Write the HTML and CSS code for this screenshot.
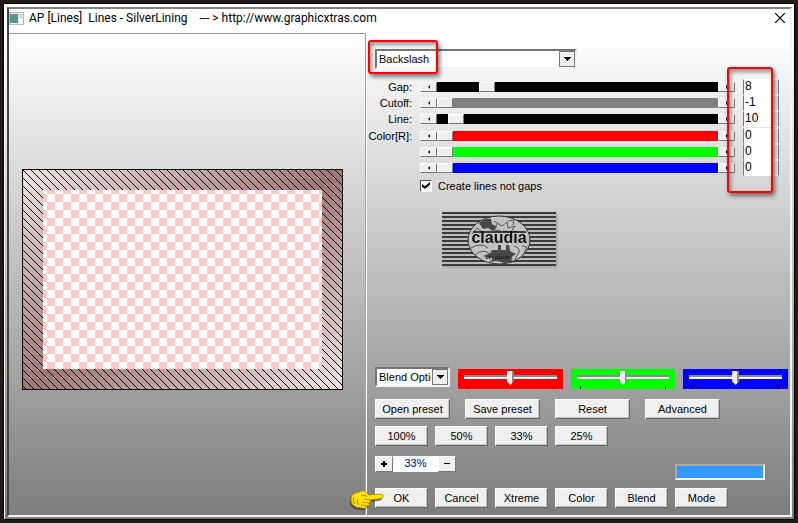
FILE: index.html
```html
<!DOCTYPE html>
<html lang="en">
<head>
<meta charset="utf-8">
<title>AP [Lines] Lines - SilverLining</title>
<link rel="stylesheet" href="styles.css">
</head>
<body>
<div class="window">
  <div class="frame">
    <header class="titlebar">
      <svg class="app-icon" width="15" height="13" viewBox="0 0 15 13" aria-hidden="true">
        <rect x="0.5" y="0.5" width="14" height="12" fill="#eef0f0" stroke="#b4b8b8"/>
        <rect x="1" y="2" width="8" height="9" fill="#5f8fa8"/>
        <path d="M1 11V6l4-3 4 4v4z" fill="#4f9a86"/>
        <rect x="10" y="2" width="3" height="4" fill="#cfdcdc"/>
        <rect x="10" y="7" width="3" height="4" fill="#fff"/>
      </svg>
      <h1 class="title">AP [Lines]  Lines - SilverLining    --- &gt; http://www.graphicxtras.com</h1>
      <button class="close" aria-label="Close">
        <svg width="10" height="10" viewBox="0 0 10 10"><path d="M0 0L10 10M10 0L0 10" stroke="#000" stroke-width="1.2"/></svg>
      </button>
    </header>
    <main class="panes">
      <section class="preview-pane" aria-label="Preview">
        <svg class="preview" viewBox="0 0 321 221" aria-hidden="true">
          <defs>
            <linearGradient id="rose" x1="0" y1="0" x2="1" y2="1">
              <stop offset="0" stop-color="#f0e6e4"/>
              <stop offset="0.5" stop-color="#a07876"/>
              <stop offset="1" stop-color="#f0e6e4"/>
            </linearGradient>
            <pattern id="hatch" width="8" height="8" patternUnits="userSpaceOnUse">
              <path d="M0 0h1v1h1v1h1v1h1v1h1v1h1v1h1v1h1v1h-1v-1h-1v-1h-1v-1h-1v-1h-1v-1h-1v-1h-1v-1h-1z" fill="#000" shape-rendering="crispEdges"/>
            </pattern>
            <pattern id="checks" x="17" y="17" width="16" height="16" patternUnits="userSpaceOnUse">
              <rect width="16" height="16" fill="#fff"/>
              <path d="M8 0h8v8h-8zM0 8h8v8h-8z" fill="#ffc8c8"/>
            </pattern>
          </defs>
          <rect width="321" height="221" fill="url(#rose)"/>
          <rect width="321" height="221" fill="url(#hatch)"/>
          <rect x="0.5" y="0.5" width="320" height="220" fill="none" stroke="#000"/>
          <rect x="21" y="21" width="279" height="179" fill="url(#checks)"/>
        </svg>
      </section>
      <section class="controls">
        <div class="pattern-pick">
          <select class="combo" aria-label="Pattern"><option>Backslash</option></select>
          <span class="marker marker-pick"></span>
        </div>
        <div class="params">
          <div class="param black">
            <label for="gap">Gap:</label>
            <div class="scroller"><button class="arrow prev" aria-label="Decrease gap"></button><input id="gap" type="range" value="16"><button class="arrow next" aria-label="Increase gap"></button></div>
            <input class="value" aria-label="Gap value" value="8">
          </div>
          <div class="param gray">
            <label for="cutoff">Cutoff:</label>
            <div class="scroller"><button class="arrow prev" aria-label="Decrease cutoff"></button><input id="cutoff" type="range" value="0"><button class="arrow next" aria-label="Increase cutoff"></button></div>
            <input class="value" aria-label="Cutoff value" value="-1">
          </div>
          <div class="param black">
            <label for="line">Line:</label>
            <div class="scroller"><button class="arrow prev" aria-label="Decrease line"></button><input id="line" type="range" value="4"><button class="arrow next" aria-label="Increase line"></button></div>
            <input class="value" aria-label="Line value" value="10">
          </div>
          <div class="param red colors">
            <label for="red">Color[R]:</label>
            <div class="scroller"><button class="arrow prev" aria-label="Decrease red"></button><input id="red" type="range" value="0"><button class="arrow next" aria-label="Increase red"></button></div>
            <input class="value" aria-label="Red value" value="0">
          </div>
          <div class="param green">
            <span></span>
            <div class="scroller"><button class="arrow prev" aria-label="Decrease green"></button><input type="range" aria-label="Green" value="0"><button class="arrow next" aria-label="Increase green"></button></div>
            <input class="value" aria-label="Green value" value="0">
          </div>
          <div class="param blue">
            <span></span>
            <div class="scroller"><button class="arrow prev" aria-label="Decrease blue"></button><input type="range" aria-label="Blue" value="0"><button class="arrow next" aria-label="Increase blue"></button></div>
            <input class="value" aria-label="Blue value" value="0">
          </div>
          <span class="marker marker-values"></span>
        </div>
        <label class="check"><input type="checkbox" checked>Create lines not gaps</label>
        <svg class="logo" width="114" height="56" viewBox="0 0 114 56" role="img" aria-label="claudia">
          <defs>
            <pattern id="bars" width="8" height="4" patternUnits="userSpaceOnUse">
              <rect width="8" height="2" fill="#3a3a3a"/><rect y="2" width="8" height="2" fill="#bcbcbc"/>
            </pattern>
          </defs>
          <rect width="114" height="54" fill="url(#bars)"/>
          <ellipse cx="57" cy="28" rx="31" ry="24" fill="#c2c2c2" stroke="#333"/>
          <path d="M37 11q6-5 12-4l1 5 5 3-4 4-5-3-5 1zM50 38h6v-5h3v5h5v-5h3l1 6 6 3-6 4 4 4-9 1-8-2-8 1 5-4-5-3zM47 46l-6-2 8-3 4 4z" fill="#484848"/>
          <path d="M30 22l5-6 6 5M52 9l8 5 5-4 1 6 7-2-4 6-8-1M29 36q10-6 17 0M33 43q8-7 15-1M72 34q8 2 4 8t-4 9M80 34l5 1-5 10M55 12l-3 6 7 1M66 9l6-1-1 5" fill="none" stroke="#555"/>
          <path d="M31 20h53" stroke="#111" stroke-width="1.5"/>
          <text class="logo-name" x="57" y="31" text-anchor="middle">claudia</text>
          <text class="logo-sub" x="57" y="47" text-anchor="middle">creations</text>
        </svg>
        <div class="bottom">
          <div class="blend-row">
            <select class="combo blend" aria-label="Blend options"><option>Blend Options</option></select>
            <div class="tone red"><input type="range" aria-label="Red tone" value="50"></div>
            <div class="tone green"><input type="range" aria-label="Green tone" value="50"></div>
            <div class="tone blue"><input type="range" aria-label="Blue tone" value="50"></div>
          </div>
          <div class="row presets">
            <button>Open preset</button><button>Save preset</button><button>Reset</button><button>Advanced</button>
          </div>
          <div class="row small">
            <button>100%</button><button>50%</button><button>33%</button><button>25%</button>
          </div>
          <div class="zoom-row">
            <div class="zoomer">
              <button aria-label="Zoom in"><svg width="6" height="6"><path d="M0 3h6M3 0v6" stroke="#000" stroke-width="2"/></svg></button>
              <output>33%</output>
              <button aria-label="Zoom out"><svg width="6" height="6"><path d="M0 2.5h6" stroke="#000"/></svg></button>
            </div>
            <div class="swatch"></div>
          </div>
          <div class="row small actions">
            <button>OK</button><button>Cancel</button><button>Xtreme</button><button>Color</button><button>Blend</button><button>Mode</button>
            <svg class="hand" width="36" height="22" viewBox="0 0 36 22" aria-hidden="true">
              <path d="M2 11Q2 5 7 4L13 2Q16 1 18 4L20 6L32 5Q35 6 34 8Q33 10 29 10L21 11Q23 13 20 14Q21 17 18 17Q18 20 13 19Q7 19 4 16Q2 14 2 11Z" transform="translate(-1 2)" fill="#222" opacity=".6"/>
              <path d="M2 11Q2 5 7 4L13 2Q16 1 18 4L20 6L32 5Q35 6 34 8Q33 10 29 10L21 11Q23 13 20 14Q21 17 18 17Q18 20 13 19Q7 19 4 16Q2 14 2 11Z" fill="#ffe800" stroke="#b87800" stroke-width=".8"/>
              <path d="M12 7l3-1q2 0 3 2M21 11l-6-1M20 14l-7-1M18 17l-6-1M5 8q-2 4 1 7M9 10q-2 3 1 6" fill="none" stroke="#c88200" stroke-width="1.2"/>
            </svg>
          </div>
        </div>
      </section>
    </main>
  </div>
</div>
</body>
</html>
```

FILE: styles.css
```css
* { box-sizing: border-box; }

body {
  margin: 0;
  padding: 3px;
  min-height: 100vh;
  display: flex;
  background: #231916;
  color: #000;
  font: 11px/16px "Liberation Sans", Arial, sans-serif;
}

button, input, select { font: inherit; color: inherit; margin: 0; }

.window {
  flex: 1;
  display: flex;
  padding: 3px 2px 2px 3px;
  border: 1px solid #000;
  background: linear-gradient(#fff 30px, #7c7c7c);
  box-shadow: inset 1px 1px #fff;
}

.frame {
  flex: 1;
  display: flex;
  flex-direction: column;
  border: 2px solid #f4f4f4;
  border-top-color: #808080;
  border-left-color: #444;
}

.titlebar {
  display: flex;
  align-items: center;
  height: 24px;
  padding: 0 5px 6px 0;
  background: #fff;
}

.title {
  flex: 1;
  margin: 0 0 0 5px;
  font: 12px/18px Roboto, "Noto Sans", sans-serif;
  white-space: pre;
}

.close { display: flex; padding: 0; border: 0; background: none; }

.panes {
  flex: 1;
  display: grid;
  grid-template-columns: 357fr 424fr;
}

.preview-pane {
  padding: 135px 22px 0 13px;
  border-top: 1px solid #999;
  border-right: 1px solid #a0a0a0;
}

.preview { display: block; width: 100%; }

.controls {
  display: flex;
  flex-direction: column;
  padding: 16px 2px 7px 8px;
  border-left: 1px solid #fff;
}

.combo {
  appearance: none;
  display: block;
  width: 202px;
  height: 20px;
  padding: 0 17px 0 2px;
  border: 2px solid;
  border-color: #777 #f4f4f4 #f4f4f4 #777;
  border-radius: 0;
  background:
    linear-gradient(#000, #000) right 4px top 6px / 7px 1px no-repeat,
    linear-gradient(#000, #000) right 5px top 7px / 5px 1px no-repeat,
    linear-gradient(#000, #000) right 6px top 8px / 3px 1px no-repeat,
    linear-gradient(#000, #000) right 7px top 9px / 1px 1px no-repeat,
    linear-gradient(#efefef, #efefef) right 1px top 1px / 14px 14px no-repeat,
    linear-gradient(#777, #777) right 0 top 0 / 16px 16px no-repeat,
    #fff;
  font-size: 11px;
}

.pattern-pick, .params { position: relative; }

.marker {
  position: absolute;
  border: 2px solid #f00;
  border-radius: 3px;
  box-shadow: 2px 3px 4px rgb(0 0 0 / 50%), inset 2px 3px 4px rgb(0 0 0 / 40%);
  pointer-events: none;
}

.marker-pick { left: -7px; top: -9px; width: 70px; height: 34px; }
.marker-values { right: 6px; top: -12px; width: 46px; height: 126px; }

.params { margin: 10px 9px 0 -3px; }

.param {
  display: grid;
  grid-template-columns: 40px 1fr 36px;
  column-gap: 8px;
  align-items: center;
  height: 16px;
}

.param label { text-align: right; white-space: nowrap; justify-self: end; }
.colors { margin-top: 1px; }

.black { --tone: #000; }
.gray { --tone: #808080; }
.red { --tone: #f00; }
.green { --tone: #0f0; }
.blue { --tone: #00f; }

.scroller { display: flex; height: 10px; }

.scroller input {
  appearance: none;
  flex: 1;
  min-width: 0;
  height: 10px;
  background: var(--tone);
}

.scroller input::-webkit-slider-thumb {
  appearance: none;
  width: 16px;
  height: 10px;
  border: 1px solid;
  border-color: #fff #777 #777 #fff;
  background: #efefef;
}

.arrow {
  display: flex;
  align-items: center;
  justify-content: center;
  width: 17px;
  padding: 0;
  border: 1px solid;
  border-color: #fff #777 #777 #fff;
  background: #efefef;
}

.arrow::before { content: ""; border: 2px solid transparent; }
.prev::before { border-right-color: #000; border-left-width: 0; }
.next::before { border-left-color: #000; border-right-width: 0; }

.value {
  width: 36px;
  height: 16px;
  padding: 0 0 3px 1px;
  border: 1px solid;
  border-color: #fff #777 #fff #777;
  border-radius: 0;
  background: linear-gradient(90deg, #fff 28px, #e9e9e9 28px);
  font-size: 12px;
}

.check {
  display: flex;
  align-items: center;
  gap: 6px;
  height: 13px;
  margin: 3px 0 0 45px;
}

.check input {
  appearance: none;
  width: 12px;
  height: 12px;
  border: 1px solid;
  border-color: #555 #fff #fff #555;
  background: #fff;
  display: grid;
  place-items: center;
}

.check input:checked::before {
  content: "";
  width: 8px;
  height: 7px;
  background: #000;
  clip-path: polygon(0 30%, 38% 62%, 100% 0, 100% 38%, 38% 100%, 0 68%);
}

.logo { margin: 20px 0 0 67px; filter: drop-shadow(1px 1px 1px #999); }
.logo-name { font: bold 16px "Liberation Sans", sans-serif; fill: #111; }
.logo-sub { font: bold 7px "Liberation Serif", serif; fill: #222; }

.bottom { margin-top: auto; }

.blend-row { display: flex; gap: 8px; height: 22px; }
.blend { width: 75px; }

.tone {
  flex: 1;
  align-self: flex-end;
  height: 20px;
  padding: 2px 6px 0;
  background:
    linear-gradient(#000, #000) left 9px bottom 0 / 1px 3px no-repeat,
    linear-gradient(#000, #000) right 9px bottom 0 / 1px 3px no-repeat,
    var(--tone);
}

.tone input {
  appearance: none;
  display: block;
  width: 100%;
  height: 14px;
  background: linear-gradient(#888 0 2px, #fff 2px) 0 4px / 100% 4px no-repeat;
}

.tone input::-webkit-slider-thumb {
  appearance: none;
  width: 7px;
  height: 14px;
  background: linear-gradient(90deg, #fff 1px, #efefef 1px 5px, #888 5px);
  clip-path: polygon(0 0, 100% 0, 100% 75%, 50% 100%, 0 75%);
}

.row { position: relative; display: flex; gap: 7px; margin-top: 7px; }
.presets { gap: 15px; margin-top: 10px; }

.row button {
  width: 53px;
  height: 20px;
  padding: 0;
  border: 1px solid;
  border-color: #fff #666 #666 #fff;
  background: #efefef;
  box-shadow: inset -1px -1px #c4c4c4;
}

.presets button { width: 75px; }

.zoom-row {
  display: flex;
  justify-content: space-between;
  height: 24px;
  margin: 10px 23px 0 0;
}

.zoomer { display: flex; height: 16px; }

.zoomer button {
  display: grid;
  place-items: center;
  width: 18px;
  padding: 0;
  border: 1px solid;
  border-color: #fff #777 #777 #fff;
  background: #efefef;
}

.zoomer output { width: 45px; background: #fff; color: #000080; text-align: center; line-height: 15px; }

.swatch {
  align-self: flex-end;
  width: 90px;
  height: 16px;
  border: 2px solid;
  border-color: #aaa #f4f4f4 #f4f4f4 #aaa;
  background: #39f;
}

.actions { margin-top: 8px; }
.hand { position: absolute; left: -26px; top: 1px; }
```
